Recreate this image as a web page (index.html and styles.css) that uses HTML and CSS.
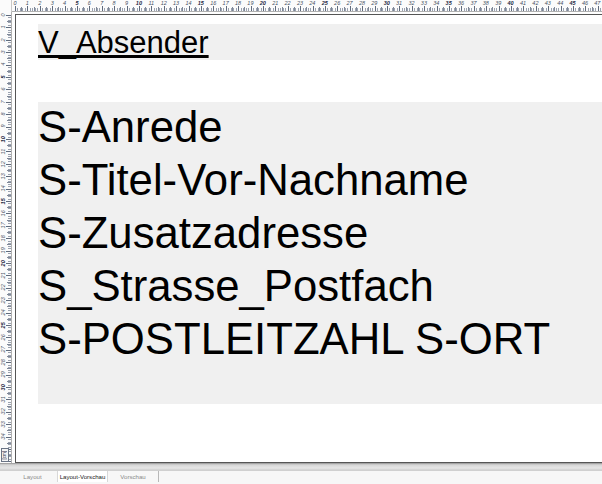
FILE: index.html
```html
<!DOCTYPE html>
<html lang="de">
<head>
<meta charset="utf-8">
<title>Layout-Vorschau</title>
<link rel="stylesheet" href="styles.css">
</head>
<body>
<div class="app">
  <div class="toprow">
    <div class="corner"></div>
    <div class="hruler">
      <div class="hlabels">
        <span>0</span><span>1</span><span>2</span><span>3</span><span>4</span><span class="b">5</span><span>6</span><span>7</span><span>8</span><span>9</span><span class="b">10</span><span>11</span><span>12</span><span>13</span><span>14</span><span class="b">15</span><span>16</span><span>17</span><span>18</span><span>19</span><span class="b">20</span><span>21</span><span>22</span><span>23</span><span>24</span><span class="b">25</span><span>26</span><span>27</span><span>28</span><span>29</span><span class="b">30</span><span>31</span><span>32</span><span>33</span><span>34</span><span class="b">35</span><span>36</span><span>37</span><span>38</span><span>39</span><span class="b">40</span><span>41</span><span>42</span><span>43</span><span>44</span><span class="b">45</span><span>46</span><span>47</span>
      </div>
    </div>
  </div>
  <div class="mid">
    <div class="vruler">
      <div class="vlabels">
        <span>0</span><span>1</span><span>2</span><span>3</span><span>4</span><span class="b">5</span><span>6</span><span>7</span><span>8</span><span>9</span><span class="b">10</span><span>11</span><span>12</span><span>13</span><span>14</span><span class="b">15</span><span>16</span><span>17</span><span>18</span><span>19</span><span class="b">20</span><span>21</span><span>22</span><span>23</span><span>24</span><span class="b">25</span><span>26</span><span>27</span><span>28</span><span>29</span><span class="b">30</span><span>31</span><span>32</span><span>33</span><span>34</span>
      </div>
      <div class="cm"><span>[cm]</span></div>
    </div>
    <div class="workspace">
      <div class="page">
        <div class="field sender"><span class="u">V_Absender</span></div>
        <div class="field address">
          <div class="lines">
            <div>S-Anrede</div>
            <div>S-Titel-Vor-Nachname</div>
            <div>S-Zusatzadresse</div>
            <div>S_Strasse_Postfach</div>
            <div>S-POSTLEITZAHL S-ORT</div>
          </div>
        </div>
      </div>
    </div>
  </div>
  <div class="hscroll"></div>
  <div class="tabs">
    <div class="tab t1">Layout</div>
    <div class="tab t2 active">Layout-Vorschau</div>
    <div class="tab t3">Vorschau</div>
  </div>
</div>
</body>
</html>
```
FILE: styles.css
```css
html, body {
  margin: 0;
  padding: 0;
  background: #ffffff;
}
.app {
  width: 602px;
  height: 484px;
  overflow: hidden;
  display: flex;
  flex-direction: column;
  font-family: "Liberation Sans", Arial, sans-serif;
}
.toprow {
  height: 12px;
  display: flex;
  flex: none;
}
.corner {
  width: 12px;
  flex: none;
  background: #fbfbfb;
  border-right: 1px solid #c8c8c8;
  box-sizing: border-box;
}
.hruler {
  flex: 1;
  overflow: hidden;
  box-sizing: border-box;
  border-bottom: 1px solid #b0b0b0;
  background-color: #fbfbfb;
  background-image:
    repeating-linear-gradient(to right, #5f6a7c 0 1px, transparent 1px 12.4px),
    repeating-linear-gradient(to right, #7f8898 0 1px, transparent 1px 6.2px),
    repeating-linear-gradient(to right, #9aa2b0 0 1px, transparent 1px 2.48px);
  background-size: 100% 5px, 100% 4px, 100% 3px;
  background-position: 3px 100%, 3px 100%, 3px 100%;
  background-repeat: no-repeat;
}
.hlabels {
  display: flex;
  margin-left: -3.2px;
  white-space: nowrap;
}
.hlabels span {
  flex: none;
  width: 12.4px;
  text-align: center;
  font-size: 5.5px;
  line-height: 6px;
  font-style: italic;
  color: #4a5466;
}
.hlabels span.b, .vlabels span.b {
  font-weight: bold;
  color: #1f2a44;
}
.mid {
  height: 451px;
  display: flex;
  flex: none;
}
.vruler {
  width: 12px;
  flex: none;
  box-sizing: border-box;
  border-right: 1px solid #b0b0b0;
  overflow: hidden;
  background-color: #fbfbfb;
  background-image:
    repeating-linear-gradient(to bottom, #5f6a7c 0 1px, transparent 1px 12.4px),
    repeating-linear-gradient(to bottom, #7f8898 0 1px, transparent 1px 6.2px),
    repeating-linear-gradient(to bottom, #9aa2b0 0 1px, transparent 1px 2.48px);
  background-size: 5px 100%, 4px 100%, 3px 100%;
  background-position: 100% 3px, 100% 3px, 100% 3px;
  background-repeat: no-repeat;
}
.vlabels {
  display: flex;
  flex-direction: column;
  margin-top: -3.2px;
}
.vlabels span {
  flex: none;
  height: 12.4px;
  width: 7px;
  writing-mode: vertical-rl;
  transform: rotate(180deg);
  text-align: center;
  font-size: 5.5px;
  line-height: 7px;
  font-style: italic;
  color: #4a5466;
}
.cm {
  margin-top: 6px;
  margin-left: 1px;
  width: 6px;
  height: 12px;
  border: 1px solid #6a7485;
  background: #f4f4f4;
  display: flex;
  align-items: center;
  justify-content: center;
}
.cm span {
  writing-mode: vertical-rl;
  transform: rotate(180deg);
  font-size: 4.5px;
  line-height: 6px;
  color: #1f2a44;
}
.workspace {
  flex: 1;
  padding: 2px 0 0 3px;
  background: #ffffff;
  overflow: hidden;
}
.page {
  height: 449px;
  box-sizing: border-box;
  border-left: 1px solid #555555;
  border-top: 1px solid #555555;
  border-bottom: 1px solid #555555;
  background: #ffffff;
  padding: 9px 0 0 22px;
}
.field {
  background: #f0f0f0;
  color: #000000;
}
.sender {
  height: 36px;
  box-sizing: border-box;
  padding-top: 1px;
  font-size: 31px;
  line-height: 35px;
}
.u {
  text-decoration: underline;
}
.address {
  margin-top: 42px;
  height: 302px;
  font-size: 43.7px;
  line-height: 53px;
  white-space: nowrap;
}
.lines {
  position: relative;
  top: -2px;
}
.hscroll {
  height: 7px;
  flex: none;
  background: linear-gradient(to bottom, #8a8a8a 0, #bdbdbd 1px, #d6d6d6 2px, #e6e6e6 5px, #cfcfcf 7px);
}
.tabs {
  flex: 1;
  display: flex;
  align-items: stretch;
  background: #f7f7f7;
  border-top: 1px solid #d0d0d0;
  padding-left: 8px;
  font-family: "Liberation Sans", Arial, sans-serif;
  font-size: 6.1px;
  color: #8a8a8a;
}
.tab {
  display: flex;
  align-items: center;
  justify-content: center;
  height: 11px;
  box-sizing: border-box;
  white-space: nowrap;
}
.t1 { width: 49px; }
.t2 {
  width: 51px;
  background: #ffffff;
  color: #222222;
  border-left: 1px solid #d8d8d8;
  border-right: 1px solid #d8d8d8;
}
.t3 {
  width: 51px;
  border-right: 1px solid #b8b8b8;
}
```
